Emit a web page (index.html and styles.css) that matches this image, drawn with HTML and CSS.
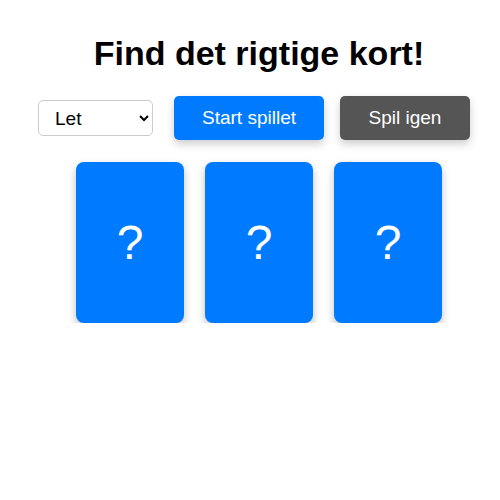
FILE: index.html
```html
<!DOCTYPE html>
<html lang="da">
<head>
    <meta charset="UTF-8">
    <meta name="viewport" content="width=device-width, initial-scale=1.0">
    <title>Find det rigtige kort</title>
    <link rel="stylesheet" href="styles.css">
</head>
<body>
    <div class="game">
        <h1 class="title">Find det rigtige kort!</h1>
        <div class="controls">
            <select id="level" class="level">
                <option>Let</option>
                <option>Mellem</option>
                <option>Svær</option>
            </select>
            <button class="btn btn-start">Start spillet</button>
            <button class="btn btn-reset">Spil igen</button>
        </div>
        <div class="cards">
            <div class="card">?</div>
            <div class="card">?</div>
            <div class="card">?</div>
        </div>
    </div>
</body>
</html>
```

FILE: styles.css
```css
body {
    font-family: "Liberation Sans", Arial, sans-serif;
    margin: 0;
    padding: 0;
    background-color: #fff;
}

.game {
    padding-left: 18px;
}

.title {
    font-size: 34px;
    line-height: 37px;
    margin: 35px 0 24px;
    text-align: center;
    color: #000;
}

.controls {
    display: flex;
    justify-content: center;
    align-items: center;
}

.level {
    width: 115px;
    height: 36px;
    margin-right: 21px;
    padding: 0 8px 0 12px;
    font-family: "Liberation Sans", Arial, sans-serif;
    font-size: 19px;
    background-color: #fff;
    border: 1px solid #ccc;
    border-radius: 5px;
    color: #000;
}

.btn {
    height: 44px;
    padding: 0 16px;
    border: none;
    border-radius: 5px;
    font-family: "Liberation Sans", Arial, sans-serif;
    font-size: 19px;
    color: #fff;
    cursor: pointer;
    box-shadow: 0 4px 8px rgba(0, 0, 0, 0.2);
}

.btn-start {
    width: 150px;
    margin-right: 16px;
    background-color: #007bff;
}

.btn-reset {
    width: 130px;
    margin-right: 10px;
    background-color: #555;
}

.cards {
    display: flex;
    justify-content: center;
    gap: 21px;
    margin-top: 22px;
}

.card {
    width: 108px;
    height: 161px;
    display: flex;
    align-items: center;
    justify-content: center;
    background-color: #007bff;
    color: #fff;
    font-size: 48px;
    border-radius: 8px;
    box-shadow: 0 4px 8px rgba(0, 0, 0, 0.25);
    cursor: pointer;
}
```
